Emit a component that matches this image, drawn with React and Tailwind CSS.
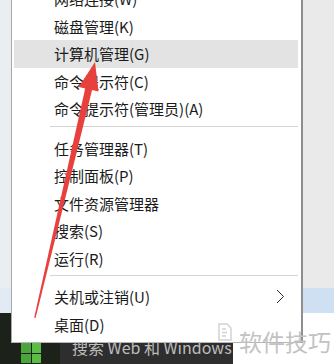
import React from "react";

const groups = [
  ["网络连接(W)", "磁盘管理(K)", "计算机管理(G)", "命令提示符(C)", "命令提示符(管理员)(A)"],
  ["任务管理器(T)", "控制面板(P)", "文件资源管理器", "搜索(S)", "运行(R)"],
  ["关机或注销(U)", "桌面(D)"],
];

const MenuItem = ({ label, active, submenu }) => (
  <div
    className={`h-[27.5px] flex items-center justify-between pl-[40px] pr-[12px] text-[15px] text-[#1b1b1b] ${
      active ? "bg-[#e3e3e3]" : ""
    }`}
  >
    <span className="leading-none whitespace-nowrap">{label}</span>
    {submenu && (
      <svg width="9" height="15" viewBox="0 0 9 15" className="mr-[1px]">
        <path d="M1 1 L7.5 7.5 L1 14" fill="none" stroke="#2a2a2a" strokeWidth="1" />
      </svg>
    )}
  </div>
);

const Separator = ({ mb }) => (
  <div className={`mt-[3px] ${mb} ml-[36px] h-px bg-[#d4d4d4]`} />
);

export default function App() {
  return (
    <div className="relative w-[334px] h-[364px] overflow-hidden font-['Noto_Sans_CJK_SC',sans-serif]">
      {/* desktop behind the menu */}
      <div className="flex flex-col h-full">
        <div className="flex h-[288px]">
          <div className="w-[11px] bg-[#e9eef3]" />
          <div className="flex-1 bg-white" />
          <div className="w-[32px] bg-[#eaeaea]" />
        </div>
        <div className="flex h-[25px]">
          <div className="w-[11px] bg-[#e2ebf4]" />
          <div className="flex-1 bg-white" />
          <div className="w-[32px] bg-[#cfe0f2]" />
        </div>
        <div className="flex-1 flex bg-[#1c2219]">
          <div className="w-[60px] flex items-end justify-center pb-[3px] pl-[2px]">
            <div className="grid grid-cols-2 gap-[1px] w-[20px] h-[20px] mb-[-2px]">
              <div className="bg-[#4aa63a]" />
              <div className="bg-[#5bbd45]" />
              <div className="bg-[#4aa63a]" />
              <div className="bg-[#5bbd45]" />
            </div>
          </div>
          <div className="flex-1 bg-[#2e2e2e] flex items-end pl-[12px] pb-[9px] text-[16px] text-[#bdbdbd] leading-none whitespace-nowrap">
            搜索 Web 和 Windows
            <span className="ml-[8px] text-[13px] text-[#dcdcdc]">jing</span>
          </div>
        </div>
      </div>

      {/* watermark backing */}
      <div className="absolute left-[233px] top-[313px] right-0 bottom-0 bg-white" />

      {/* context menu */}
      <div className="absolute left-[11px] top-[-15px] w-[292px] bg-white border-l border-[#a9a9a9] border-r-2 border-r-[#8e8e8e] border-b border-b-[#b5b5b5] pl-[2px] pr-[3px] pb-[4px]">
        {groups[0].map((l, i) => (
          <MenuItem key={l} label={l} active={i === 2} />
        ))}
        <Separator mb="mb-[8px]" />
        {groups[1].map((l) => (
          <MenuItem key={l} label={l} />
        ))}
        <Separator mb="mb-[7px]" />
        {groups[2].map((l, i) => (
          <MenuItem key={l} label={l} submenu={i === 0} />
        ))}
      </div>

      {/* red arrow */}
      <svg className="absolute left-0 top-0" width="334" height="364" viewBox="0 0 334 364">
        <polygon points="85.4,87.6 92.2,89.4 35.6,318 34.2,317.6" fill="#e8403d" />
        <polygon points="95,62 98.5,91.5 78.8,86.9" fill="#e8403d" />
      </svg>

      {/* watermark */}
      <div className="absolute left-[217px] top-[320px] flex items-start gap-[6px]">
        <svg width="16" height="20" viewBox="0 0 16 20" className="mt-[2px]">
          <path d="M2 2 H10 L14 6 V18 H2 Z" fill="none" stroke="#d2d2d2" strokeWidth="1.5" />
          <path d="M5 7 H9 M5 10.5 H10 M5 14 H9" stroke="#d2d2d2" strokeWidth="1.5" />
        </svg>
        <span className="text-[23px] text-[#c2c2c2] leading-none mt-[10px] whitespace-nowrap">
          软件技巧
        </span>
      </div>
    </div>
  );
}
